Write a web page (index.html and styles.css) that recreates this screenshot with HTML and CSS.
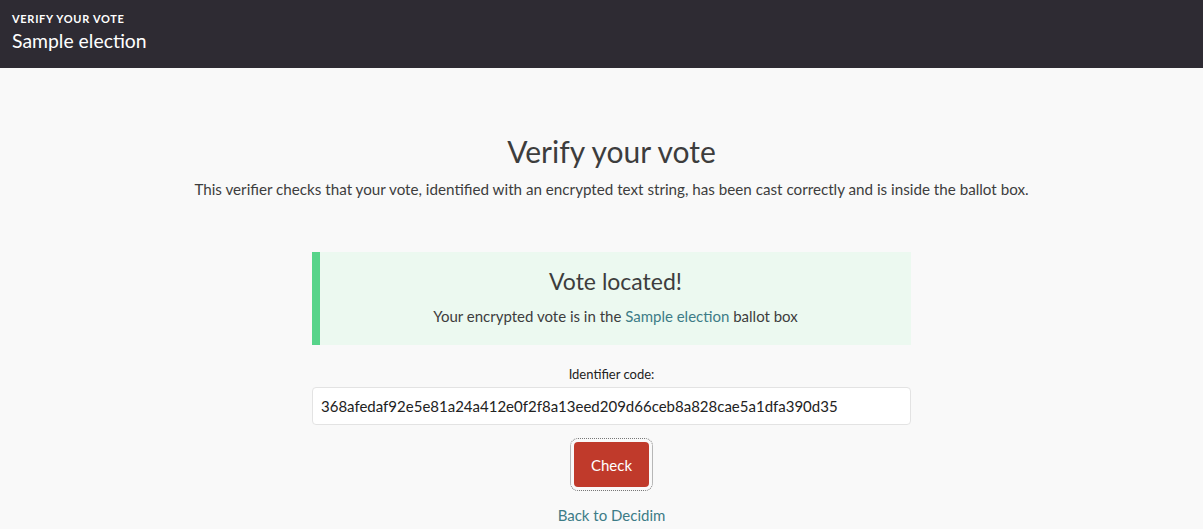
FILE: index.html
```html
<!DOCTYPE html>
<html lang="en">
<head>
<meta charset="utf-8">
<title>Verify your vote</title>
<link rel="stylesheet" href="styles.css">
</head>
<body>
<header class="topbar">
  <div class="kicker">VERIFY YOUR VOTE</div>
  <div class="election">Sample election</div>
</header>
<main class="page">
  <h1 class="title">Verify your vote</h1>
  <p class="intro">This verifier checks that your vote, identified with an encrypted text string, has been cast correctly and is inside the ballot box.</p>
  <section class="panel">
    <div class="callout">
      <h2 class="callout-title">Vote located!</h2>
      <p class="callout-text">Your encrypted vote is in the <a class="link" href="#">Sample election</a> ballot box</p>
    </div>
    <form class="form">
      <label class="label" for="code">Identifier code:</label>
      <input class="input" id="code" type="text" value="368afedaf92e5e81a24a412e0f2f8a13eed209d66ceb8a828cae5a1dfa390d35">
      <div class="actions">
        <button class="button" type="button">Check</button>
      </div>
      <a class="back" href="#">Back to Decidim</a>
    </form>
  </section>
</main>
</body>
</html>
```
FILE: styles.css
```css
* { box-sizing: border-box; }
html, body { margin: 0; padding: 0; }
body {
  background: #f9f9f9;
  font-family: Lato, "Noto Sans", sans-serif;
  color: #3d3d3d;
}
.topbar {
  background: #2e2b33;
  color: #ffffff;
  height: 68px;
  padding: 12px 12px 0;
}
.kicker {
  font-size: 11px;
  font-weight: 700;
  letter-spacing: 0.7px;
  line-height: 14px;
}
.election {
  font-size: 19.4px;
  line-height: 30px;
}
.page {
  display: flex;
  flex-direction: column;
  align-items: center;
  padding: 63px 0 0 20px;
}
.title {
  margin: 0;
  font-size: 30px;
  font-weight: 400;
  line-height: 40px;
  color: #3d3d3d;
}
.intro {
  margin: 7px 0 0;
  font-size: 15.2px;
  line-height: 22px;
  color: #3d3d3d;
}
.panel {
  width: 599px;
  margin-top: 52px;
  display: flex;
  flex-direction: column;
}
.callout {
  background: #ecf9f0;
  border-left: 8px solid #57d48a;
  height: 93px;
  padding-top: 13px;
  text-align: center;
}
.callout-title {
  margin: 0;
  font-size: 23px;
  font-weight: 400;
  line-height: 32px;
  color: #3d3d3d;
}
.callout-text {
  margin: 8px 0 0;
  font-size: 15px;
  line-height: 22px;
}
.link, .back {
  color: #3d7c87;
  text-decoration: none;
}
.form {
  display: flex;
  flex-direction: column;
  align-items: center;
  margin-top: 21px;
}
.label {
  font-size: 13px;
  line-height: 16px;
  color: #222;
}
.input {
  margin-top: 5px;
  width: 100%;
  height: 38px;
  border: 1px solid #e3e3e3;
  border-radius: 4px;
  background: #ffffff;
  padding: 0 8px;
  font-family: inherit;
  font-size: 15px;
  color: #222;
}
.actions {
  margin-top: 17px;
}
.button {
  width: 75px;
  height: 45px;
  border: 0;
  border-radius: 4px;
  background: #c03a2b;
  color: #ffffff;
  font-family: inherit;
  font-size: 15px;
  outline: 1px dotted #777;
  outline-offset: 3px;
}
.back {
  margin-top: 18px;
  font-size: 15px;
  line-height: 20px;
}
```
